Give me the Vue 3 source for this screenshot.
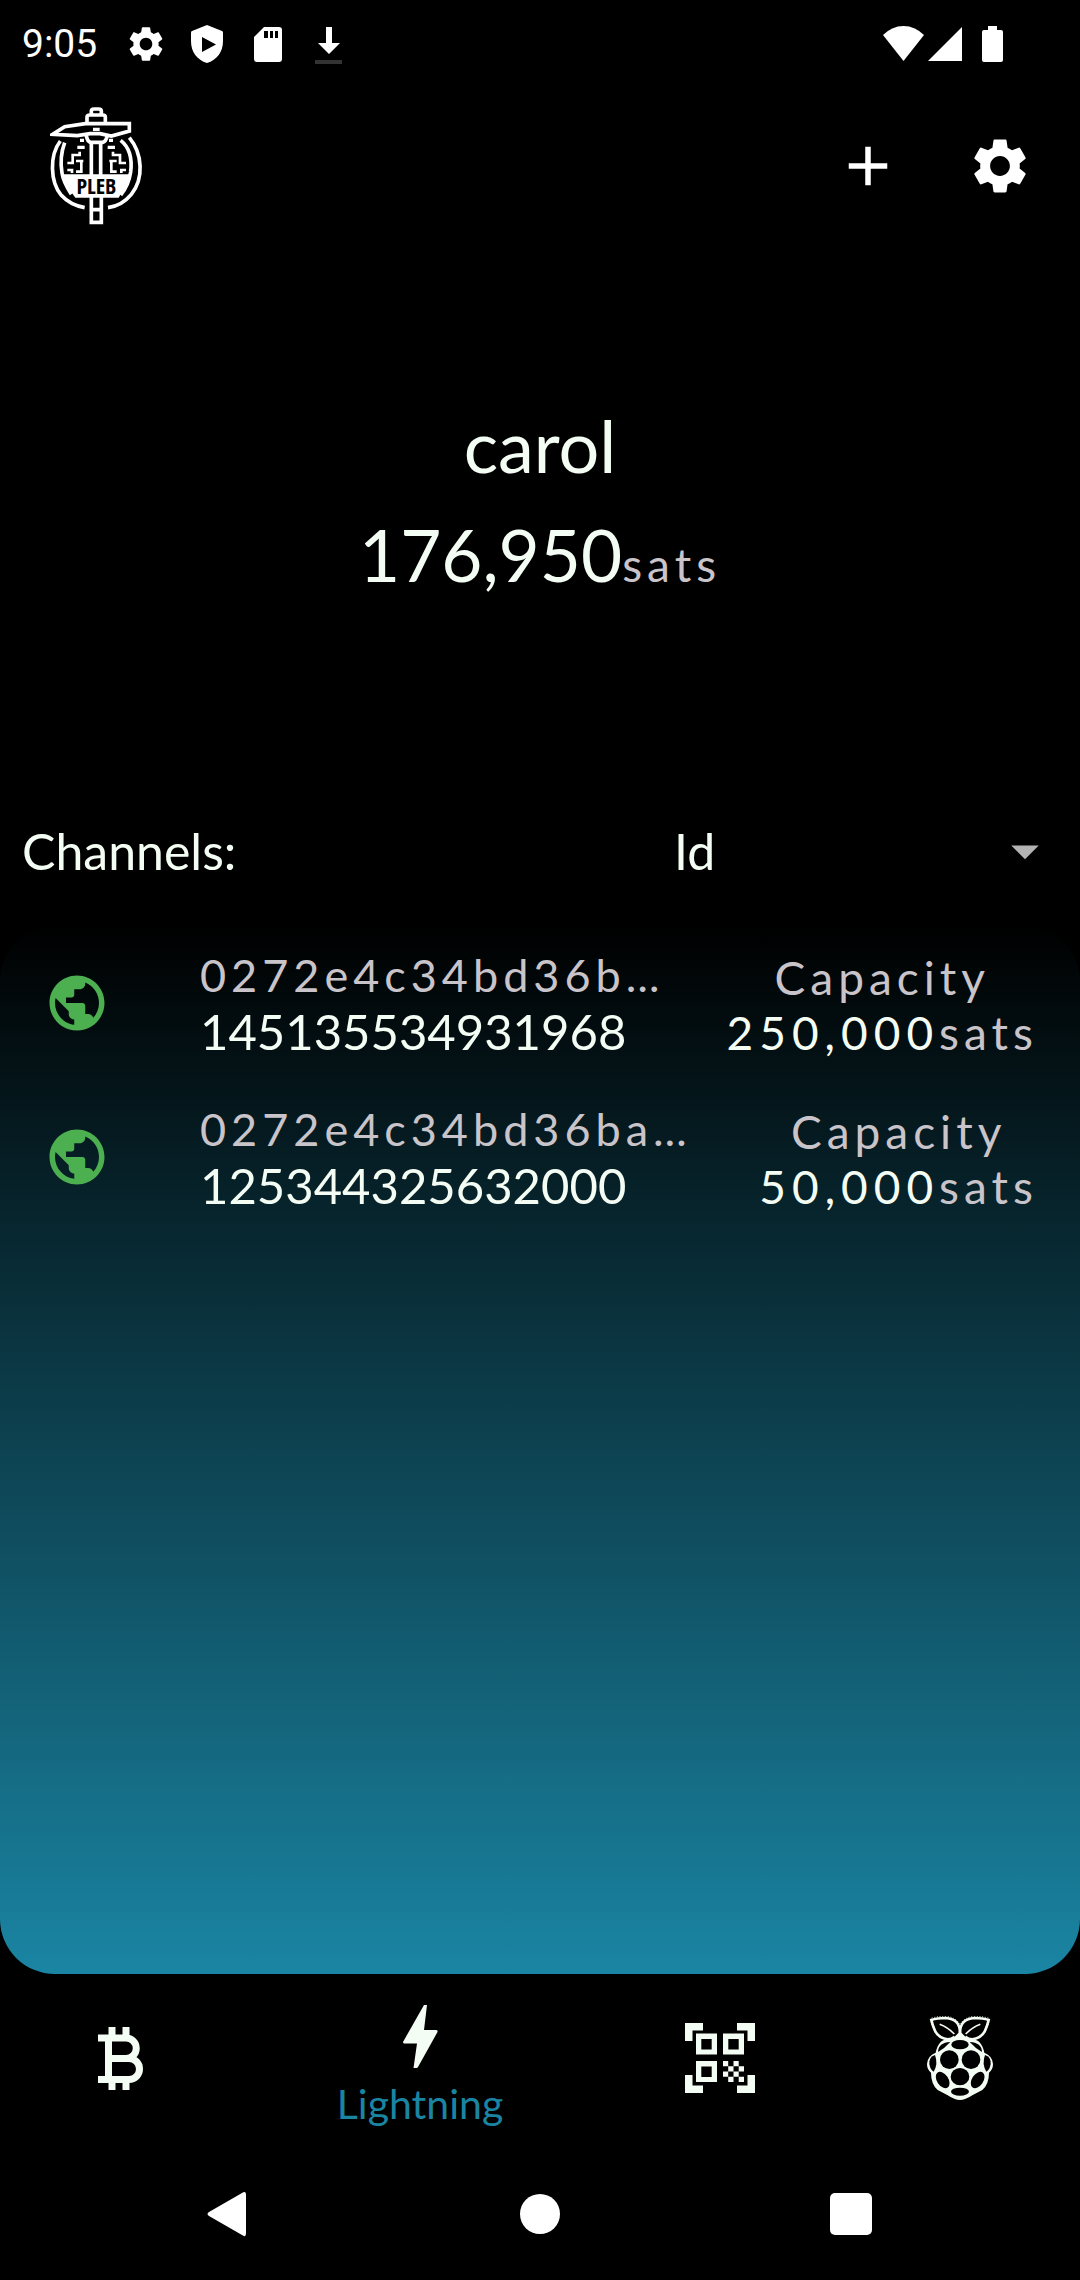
<script setup>
import { ref } from 'vue'

const sortBy = ref('Id')
const sortOptions = ['Id', 'Capacity', 'Alias']

const channels = [
  { pubkey: '0272e4c34bd36b…', id: '145135534931968', capacity: '250,000' },
  { pubkey: '0272e4c34bd36ba…', id: '125344325632000', capacity: '50,000' },
]

const gear =
  'M19.14 12.94c.04-.3.06-.61.06-.94 0-.32-.02-.64-.07-.94l2.03-1.58c.18-.14.23-.41.12-.61l-1.92-3.32c-.12-.22-.37-.29-.59-.22l-2.39.96c-.5-.38-1.03-.7-1.62-.94l-.36-2.54c-.04-.24-.24-.41-.48-.41h-3.84c-.24 0-.43.17-.47.41l-.36 2.54c-.59.24-1.13.57-1.62.94l-2.39-.96c-.22-.08-.47 0-.59.22L2.74 8.87c-.12.21-.08.47.12.61l2.03 1.58c-.05.3-.09.63-.09.94s.02.64.07.94l-2.03 1.58c-.18.14-.23.41-.12.61l1.92 3.32c.12.22.37.29.59.22l2.39-.96c.5.38 1.03.7 1.62.94l.36 2.54c.05.24.24.41.48.41h3.84c.24 0 .44-.17.47-.41l.36-2.54c.59-.24 1.13-.56 1.62-.94l2.39.96c.22.08.47 0 .59-.22l1.92-3.32c.12-.22.07-.47-.12-.61l-2.01-1.58zM12 15.6c-1.98 0-3.6-1.62-3.6-3.6s1.62-3.6 3.6-3.6 3.6 1.62 3.6 3.6-1.62 3.6-3.6 3.6z'
</script>

<template>
  <div class="screen">
    <div class="status">
      <div class="status-left">
        <time>9:05</time>
        <svg width="42" height="42" viewBox="0 0 24 24"><path :d="gear" /></svg>
        <svg width="42" height="42" viewBox="0 0 42 42">
          <path fill-rule="evenodd" d="M21 2 L36 8 Q37 8 37 10 V18 C37 29 31 37 21 40 C11 37 5 29 5 18 V10 Q5 8 6 8 Z M16 14 V29 L30 21.500 Z" />
        </svg>
        <svg width="42" height="42" viewBox="0 0 42 42">
          <path fill-rule="evenodd" d="M17 4 H32 Q35 4 35 7 V36 Q35 39 32 39 H10 Q7 39 7 36 V14 Z M17 8 V15 H21 V8 Z M23 8 V15 H26 V8 Z M28 8 V15 H31 V8 Z" />
        </svg>
        <svg width="42" height="42" viewBox="0 0 42 42">
          <path d="M18 4 H24 V20 H32 L21 31 L10 20 H18 Z" />
          <rect x="7" y="37" width="27" height="4" fill="#333" />
        </svg>
      </div>
      <div class="status-right">
        <svg width="41" height="36" viewBox="0 0 41 36"><path d="M0 9 A28 28 0 0 1 41 9 L20.500 35 Z" /></svg>
        <svg class="signal" width="34" height="36" viewBox="0 0 34 36"><path d="M34 1 V35 H0 Z" /></svg>
        <svg width="21" height="36" viewBox="0 0 21 36">
          <path d="M6 0 H15 V4 H19 Q21 4 21 6 V34 Q21 36 19 36 H2 Q0 36 0 34 V6 Q0 4 2 4 H6 Z" />
        </svg>
      </div>
    </div>

    <header class="appbar">
      <svg class="logo" width="94" height="118" viewBox="30 20 282 354">
        <g fill="none" stroke="#fff" stroke-width="11">
          <path d="M61 122 C28 165 30 245 64 285 Q90 314 134 322" />
          <path d="M74 127 Q58 170 66 218 Q70 245 94 282" />
          <path d="M268 112 C308 160 312 235 274 282 Q246 316 204 322" />
          <path d="M242 120 Q280 150 272 215 Q266 255 242 284" />
          <path d="M38 102 L74 79 L136 70 H268 V92 L214 107 L180 100 H150 L112 106 Z" />
          <path d="M141 70 V50 Q141 44 150 44 H188 Q196 44 196 50 V70" />
          <path d="M154 42 V32 Q154 26 162 26 H176 Q184 26 184 32 V42" />
          <path d="M139 106 Q142 124 152 126 H188 Q198 124 202 106" />
          <path d="M154 126 V228 M182 126 V228" />
          <path d="M154 290 V366 H184 V290 M154 328 H184" />
        </g>
        <path fill="none" stroke="#fff" stroke-width="8" d="M119 154 V164 H98 V188 H82 M82 209 H96 V218 M124 182 V214 H108 M108 182 H130 M219 154 V164 H240 V188 H258 M258 209 H244 V218 M214 182 V214 H230 M208 182 H230" />
        <path fill="#fff" d="M120 115 h12 v10 h-12 Z M112 136 h22 v10 h-22 Z M207 115 h12 v10 h-12 Z M203 136 h22 v10 h-22 Z M159 82 h20 v10 h-20 Z" />
        <path fill="#fff" d="M70 222 H268 Q262 250 236 292 H106 Q78 256 70 222 Z" />
        <text x="169" y="281" text-anchor="middle">PLEB</text>
      </svg>
      <div class="actions">
        <button type="button" aria-label="Add">
          <svg width="66" height="66" viewBox="0 0 24 24"><path d="M19 13h-6v6h-2v-6H5v-2h6V5h2v6h6z" /></svg>
        </button>
        <button type="button" aria-label="Settings">
          <svg width="66" height="66" viewBox="0 0 24 24"><path :d="gear" /></svg>
        </button>
      </div>
    </header>

    <section class="balance">
      <h1>carol</h1>
      <p>176,950<span class="unit">sats</span></p>
    </section>

    <div class="sort">
      <label for="sort">Channels:</label>
      <div class="picker">
        <select id="sort" v-model="sortBy">
          <option v-for="o in sortOptions" :key="o">{{ o }}</option>
        </select>
        <svg class="caret" width="66" height="66" viewBox="0 0 24 24"><path d="M7 10l5 5 5-5z" /></svg>
      </div>
    </div>

    <main class="panel">
      <ul>
        <li v-for="c in channels" :key="c.id">
          <svg class="globe" width="66" height="66" viewBox="0 0 24 24">
            <path d="M12 2C6.480 2 2 6.480 2 12s4.480 10 10 10 10-4.480 10-10S17.520 2 12 2zm-1 17.930c-3.950-.49-7-3.850-7-7.930 0-.62.08-1.210.21-1.790L9 15v1c0 1.100.9 2 2 2v1.930zm6.900-2.540c-.26-.81-1-1.390-1.900-1.390h-1v-3c0-.55-.45-1-1-1H8v-2h2c.55 0 1-.45 1-1V7h2c1.100 0 2-.9 2-2v-.41c2.930 1.190 5 4.060 5 7.410 0 2.080-.8 3.970-2.100 5.390z" />
          </svg>
          <div class="names">
            <div class="key">{{ c.pubkey }}</div>
            <div class="chan">{{ c.id }}</div>
          </div>
          <div class="capacity">
            <div>Capacity</div>
            <div><span class="amount">{{ c.capacity }}</span>sats</div>
          </div>
        </li>
      </ul>
    </main>

    <nav class="tabs">
      <button type="button" aria-label="Bitcoin">
        <svg class="outline" width="45" height="63" viewBox="0 0 45 63">
          <path d="M0 11 H28 A10.200 10.200 0 0 1 28 31.500 H10 M28 31.500 H31 A10.500 10.500 0 0 1 31 52.500 H0 M10.500 11 V52 M14 0 V11 M28 0 V11 M14 52 V63 M28 52 V63" />
        </svg>
      </button>
      <button type="button" class="active">
        <svg width="35" height="63" viewBox="0 0 35 63">
          <path d="M21 0 H24 L21 25 H33 Q35 25 34.500 27 L15 62 L14 63 H10.500 L14 38.500 H1 Q0 38 0 37 Z" />
        </svg>
        <span>Lightning</span>
      </button>
      <button type="button" aria-label="Scan">
        <svg width="70" height="70" viewBox="0 0 70 70">
          <path d="M0 0h18v7.500H7.500V18H0zM70 0v18h-7.500V7.500H52V0zM0 70V52h7.500v10.500H18V70zM70 70H52v-7.500h10.500V52H70z" />
          <path fill-rule="evenodd" d="M11 10.500h21v21H11zM16.300 16v10.500h10.400V16zM38 10.500h21v21H38zM43.300 16v10.500h10.400V16zM11 38h21v21H11zM16.300 43.500V54h10.400V43.500z" />
          <path d="M38 38h5.200v5.200H38zM48.500 38h5.200v5.200h-5.200zM43.200 43.200h5.300v5.300h-5.300zM53.700 43.200H59v5.300h-5.300zM38 48.500h5.200v5.200H38zM48.500 48.500h5.200v5.200h-5.200zM43.200 53.700h5.300V59h-5.300zM53.700 53.700H59V59h-5.300z" />
        </svg>
      </button>
      <button type="button" aria-label="Node">
        <svg width="66" height="84" viewBox="50 46 198 252">
          <path d="M149 92 L175 118 Q212 108 222 156 Q247 166 248 190 Q248 206 236 216 Q236 250 216 268 L186 284 Q165 298 149 298 Q133 298 112 284 L82 268 Q62 250 62 216 Q50 206 50 190 Q51 166 76 156 Q86 108 123 118 Z" />
          <g class="leaf">
            <path stroke-width="8" d="M149 96 C149 70 136 54 106 52 Q80 52 63 58 Q66 72 74 90 Q84 112 112 116 Q124 116 133 108" />
            <path stroke-width="5" d="M88 71 Q112 80 132 100" />
            <path stroke-width="3" stroke-dasharray="3 5" d="M147 70 Q136 49 106 47 Q80 47 61 53 Q62 72 71 90" />
          </g>
          <g class="leaf" transform="translate(298 0) scale(-1 1)">
            <path stroke-width="8" d="M149 96 C149 70 136 54 106 52 Q80 52 63 58 Q66 72 74 90 Q84 112 112 116 Q124 116 133 108" />
            <path stroke-width="5" d="M88 71 Q112 80 132 100" />
            <path stroke-width="3" stroke-dasharray="3 5" d="M147 70 Q136 49 106 47 Q80 47 61 53 Q62 72 71 90" />
          </g>
          <g fill="#000">
            <ellipse cx="149" cy="132" rx="26" ry="14" />
            <ellipse cx="117" cy="177" rx="28" ry="28" />
            <ellipse cx="182" cy="177" rx="28" ry="28" />
            <ellipse cx="149" cy="228" rx="28" ry="26" />
            <ellipse cx="97" cy="238" rx="17" ry="27" transform="rotate(-34 97 238)" />
            <ellipse cx="202" cy="238" rx="17" ry="27" transform="rotate(34 202 238)" />
            <ellipse cx="149" cy="273" rx="27" ry="12" />
            <path d="M74 163 Q56 168 57 190 Q60 208 70 213 Q84 190 74 163 Z" />
            <path d="M224 163 Q242 168 241 190 Q238 208 228 213 Q214 190 224 163 Z" />
            <path d="M83 154 Q84 126 120 124 Q104 142 83 154 Z" />
            <path d="M215 154 Q214 126 178 124 Q194 142 215 154 Z" />
          </g>
        </svg>
      </button>
    </nav>

    <div class="system">
      <button type="button" aria-label="Back">
        <svg width="46" height="46" viewBox="0 0 46 46"><path d="M36 2 Q40 -1 40 4 V42 Q40 47 36 44 L3 25 Q0 23 3 21 Z" /></svg>
      </button>
      <button type="button" aria-label="Home">
        <svg width="42" height="42" viewBox="0 0 42 42"><circle cx="21" cy="21" r="20" /></svg>
      </button>
      <button type="button" aria-label="Recents">
        <svg width="42" height="42" viewBox="0 0 42 42"><rect width="42" height="42" rx="5" /></svg>
      </button>
    </div>
  </div>
</template>

<style>
body {
  background: #000;
}
</style>

<style scoped>
.screen {
  display: flex;
  flex-direction: column;
  min-height: 100vh;
  background: #000;
  color: #f4fdf4;
  font-family: Lato, sans-serif;
}
svg {
  display: block;
  flex: none;
  fill: #fff;
}
button {
  padding: 0;
  border: 0;
  background: none;
  color: inherit;
  font: inherit;
}
h1,
p,
ul {
  margin: 0;
  padding: 0;
  font-weight: 400;
}
.status {
  display: flex;
  justify-content: space-between;
  height: 88px;
  padding: 0 77px 0 22px;
  color: #fff;
  font-family: Roboto, sans-serif;
  font-size: 39px;
}
.status-left,
.status-right {
  display: flex;
  align-items: center;
}
.status-left {
  gap: 19px;
}
.status-left time {
  margin-right: 9px;
}
.signal {
  margin: 0 20px 0 4px;
}
.appbar {
  display: flex;
  align-items: center;
  justify-content: space-between;
  height: 156px;
  padding: 0 14px 0 50px;
}
.logo text {
  fill: #000;
  font-family: "Open Sans Condensed", Roboto, sans-serif;
  font-size: 66px;
  font-weight: 600;
}
.actions {
  display: flex;
}
.actions button {
  display: flex;
  align-items: center;
  justify-content: center;
  width: 132px;
  height: 132px;
}
.balance {
  padding: 147px 24px 166px;
  text-align: center;
  font-size: 71px;
  line-height: 109px;
}
.balance h1 {
  font-size: 72px;
}
.unit {
  color: #c9c4c9;
  font-size: 46px;
  line-height: 46px;
  letter-spacing: 5px;
}
.sort {
  display: flex;
  align-items: center;
  height: 151px;
  padding: 0 22px;
  font-size: 50px;
}
.sort label {
  flex: 1;
}
.picker {
  display: grid;
  align-items: center;
  width: 384px;
}
.picker > * {
  grid-area: 1 / 1;
}
.picker select {
  appearance: none;
  width: 100%;
  padding: 0;
  border: 0;
  background: none;
  color: inherit;
  font: inherit;
}
.caret {
  justify-self: end;
  fill: #b3b3b3;
  pointer-events: none;
}
.panel {
  flex: 1;
  border-radius: 55px;
  background: linear-gradient(#000, #1a85a3);
}
.panel li {
  display: flex;
  align-items: center;
  height: 154px;
  padding: 0 42px 0 44px;
  list-style: none;
}
.globe {
  fill: #4caf50;
}
.names {
  flex: 1;
  margin-left: 90px;
  line-height: 56px;
}
.key {
  color: #c9c4c9;
  font-size: 45px;
  letter-spacing: 5px;
}
.chan {
  font-size: 49px;
}
.capacity {
  padding-top: 4px;
  color: #c9c4c9;
  font-size: 46px;
  letter-spacing: 5px;
  text-align: center;
  line-height: 55px;
}
.amount {
  color: #f4fdf4;
  letter-spacing: 6px;
}
.tabs {
  display: flex;
  height: 174px;
  padding-bottom: 6px;
  box-sizing: border-box;
}
.tabs button {
  display: flex;
  flex: 2;
  flex-direction: column;
  align-items: center;
  justify-content: center;
}
.tabs .active {
  flex: 3;
  gap: 12px;
  padding-top: 16px;
}
.tabs svg {
  fill: #f4fdf4;
}
.tabs span {
  color: #1a85a3;
  font-size: 41px;
  line-height: 48px;
}
.tabs .outline {
  fill: none;
  stroke: #f4fdf4;
  stroke-width: 7;
}
.leaf {
  fill: none;
  stroke: #f4fdf4;
}
.system {
  display: flex;
  align-items: center;
  justify-content: center;
  gap: 245px;
  height: 132px;
}
.system button {
  display: flex;
  justify-content: center;
  width: 66px;
}
</style>
